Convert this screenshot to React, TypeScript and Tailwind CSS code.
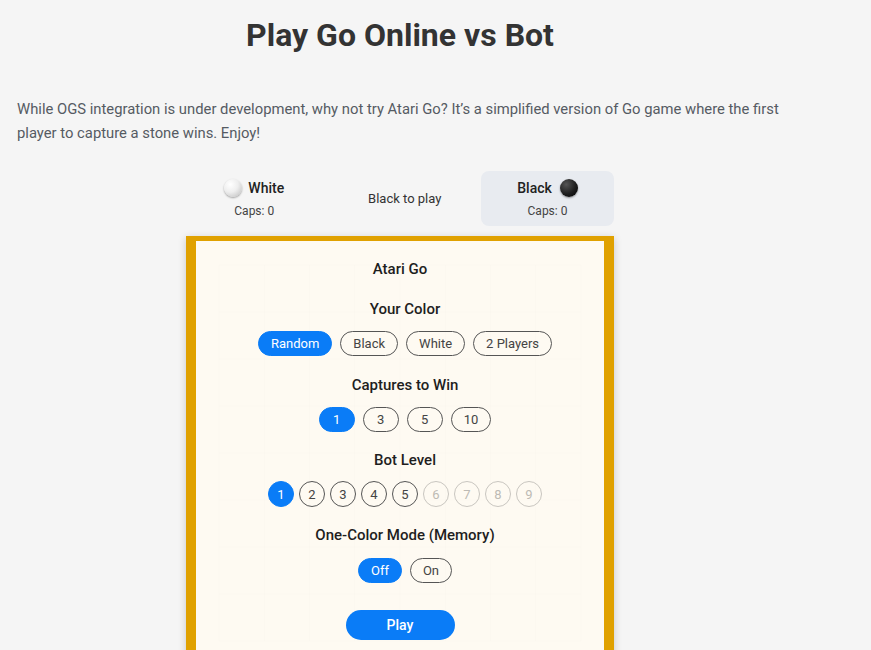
import React, { useState } from 'react';

const font = { fontFamily: 'Roboto, "Noto Sans", Arial, sans-serif' };

type PillProps = {
  label: string;
  active?: boolean;
  onClick?: () => void;
};

function Pill({ label, active, onClick }: PillProps) {
  return (
    <button
      onClick={onClick}
      className={
        active
          ? 'h-[25px] min-w-[36px] px-3 rounded-full border border-[#0a7cf7] bg-[#0a7cf7] text-white text-[13px] leading-none'
          : 'h-[25px] min-w-[36px] px-3 rounded-full border border-[#555] bg-transparent text-[#444] text-[13px] leading-none'
      }
    >
      {label}
    </button>
  );
}

function LevelDot({ n, active, disabled, onClick }: { n: number; active: boolean; disabled: boolean; onClick: () => void }) {
  let cls = 'w-[26px] h-[26px] rounded-full border text-[13px] leading-none flex items-center justify-center ';
  if (active) cls += 'bg-[#0a7cf7] border-[#0a7cf7] text-white';
  else if (disabled) cls += 'border-[#c9c6c0] text-[#bdbab4]';
  else cls += 'border-[#555] text-[#444]';
  return (
    <button className={cls} onClick={onClick} disabled={disabled}>
      {n}
    </button>
  );
}

function Stone({ color }: { color: 'white' | 'black' }) {
  return color === 'white' ? (
    <span className="inline-block w-[18px] h-[18px] rounded-full bg-[radial-gradient(circle_at_35%_30%,#ffffff_0%,#eeeeee_45%,#b9b9b9_100%)] shadow-[0_1px_2px_rgba(0,0,0,0.35)]" />
  ) : (
    <span className="inline-block w-[18px] h-[18px] rounded-full bg-[radial-gradient(circle_at_35%_30%,#555555_0%,#1e1e1e_55%,#000000_100%)] shadow-[0_1px_2px_rgba(0,0,0,0.4)]" />
  );
}

// faint 9x9 board lines behind the setup overlay
function BoardLines() {
  const lines = [];
  for (let i = 0; i < 9; i++) {
    const p = 24 + i * 47;
    lines.push(<line key={'h' + i} x1={24} y1={p} x2={400} y2={p} />);
    lines.push(<line key={'v' + i} x1={p} y1={24} x2={p} y2={400} />);
  }
  return (
    <svg className="absolute inset-0 w-full h-[424px]" viewBox="0 0 424 424" preserveAspectRatio="none">
      <g stroke="#000" strokeOpacity="0.015" strokeWidth="1">{lines}</g>
    </svg>
  );
}

function Heading({ children, className = '' }: { children: React.ReactNode; className?: string }) {
  return <div className={'text-[15px] leading-[20px] font-medium text-[#1e1e1e] ' + className}>{children}</div>;
}

export default function App() {
  const [color, setColor] = useState('Random');
  const [caps, setCaps] = useState('1');
  const [level, setLevel] = useState(1);
  const [memory, setMemory] = useState('Off');

  return (
    <div className="min-h-screen bg-[#f5f5f5]" style={font}>
      <div className="w-[800px] px-[17px]">
        <h1 className="pt-[16px] text-center text-[32px] leading-[38px] font-bold text-[#333]">Play Go Online vs Bot</h1>

        <p className="mt-[43px] text-[14.8px] leading-[24px] text-[#555b63]">
          While OGS integration is under development, why not try Atari Go? It’s a simplified version of Go game where the first
          player to capture a stone wins. Enjoy!
        </p>

        <div className="mx-auto mt-[26px] w-[428px]">
          {/* score bar */}
          <div className="flex items-center gap-2 h-[55px]">
            <div className="flex-1 flex flex-col items-center pr-[6px]">
              <div className="flex items-center gap-[6px] text-[14px] font-medium text-[#222]">
                <Stone color="white" />
                <span>White</span>
              </div>
              <div className="mt-[3px] text-[12px] text-[#444]">Caps: 0</div>
            </div>
            <div className="flex-1 text-center text-[13px] text-[#333]">Black to play</div>
            <div className="w-[133px] h-[55px] rounded-lg bg-[#e8ebf0] flex flex-col items-center justify-center">
              <div className="flex items-center gap-[8px] text-[14px] font-medium text-[#222]">
                <span>Black</span>
                <Stone color="black" />
              </div>
              <div className="mt-[3px] text-[12px] text-[#444]">Caps: 0</div>
            </div>
          </div>

          {/* board */}
          <div className="mt-[10px] bg-[#e0a100] pt-[5px] px-[10px] shadow-[0_2px_8px_rgba(0,0,0,0.18)]">
            <div className="relative h-[424px] bg-[#fefaf2]">
              <BoardLines />
              <div className="relative flex flex-col items-center pt-[18px]">
                <Heading>Atari Go</Heading>

                <div className="flex flex-col items-center pl-[10px]">
                  <Heading className="mt-[20px]">Your Color</Heading>
                  <div className="mt-[12px] flex gap-2">
                    {['Random', 'Black', 'White', '2 Players'].map((c) => (
                      <Pill key={c} label={c} active={color === c} onClick={() => setColor(c)} />
                    ))}
                  </div>

                  <Heading className="mt-[19px]">Captures to Win</Heading>
                  <div className="mt-[12px] flex gap-2">
                    {['1', '3', '5', '10'].map((c) => (
                      <Pill key={c} label={c} active={caps === c} onClick={() => setCaps(c)} />
                    ))}
                  </div>

                  <Heading className="mt-[18px]">Bot Level</Heading>
                  <div className="mt-[11px] flex gap-[5px]">
                    {[1, 2, 3, 4, 5, 6, 7, 8, 9].map((n) => (
                      <LevelDot key={n} n={n} active={level === n} disabled={n > 5} onClick={() => setLevel(n)} />
                    ))}
                  </div>

                  <Heading className="mt-[18px]">One-Color Mode (Memory)</Heading>
                  <div className="mt-[13px] flex gap-2">
                    {['Off', 'On'].map((c) => (
                      <Pill key={c} label={c} active={memory === c} onClick={() => setMemory(c)} />
                    ))}
                  </div>
                </div>

                <button className="mt-[27px] w-[109px] h-[30px] rounded-full bg-[#0a7cf7] text-white text-[14px] font-medium">
                  Play
                </button>
              </div>
            </div>
          </div>
        </div>
      </div>
    </div>
  );
}
